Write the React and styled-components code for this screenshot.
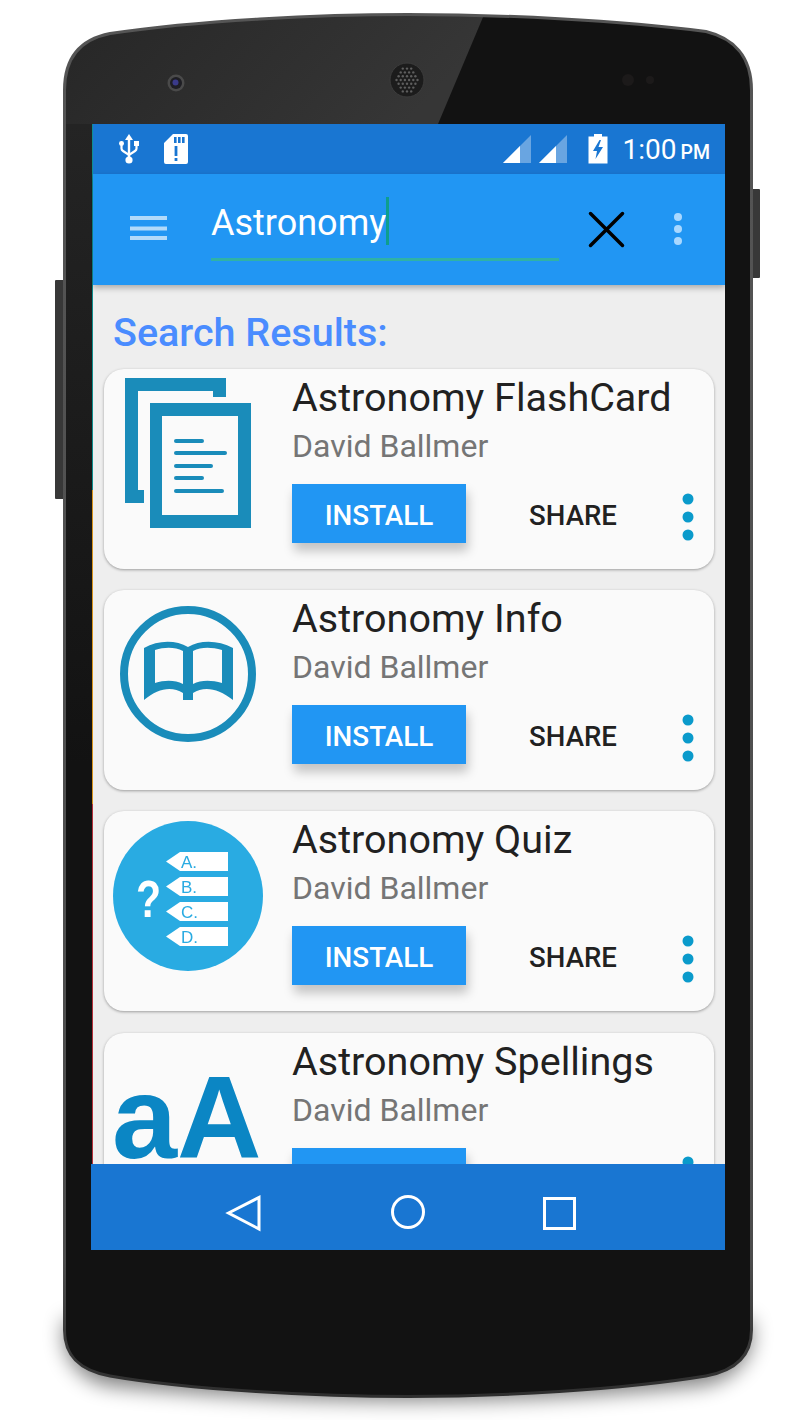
import React from "react";
import styled, { createGlobalStyle } from "styled-components";

const Global = createGlobalStyle`
  html, body { margin: 0; padding: 0; background: #fff; }
  body { font-family: Roboto, "Liberation Sans", sans-serif; }
`;

const Page = styled.div`
  position: relative;
  width: 802px;
  height: 1420px;
  overflow: hidden;
  padding: 124px 77px 0 91px;
  box-sizing: border-box;
`;

const DeviceArt = styled.svg`
  position: absolute;
  left: 0;
  top: 0;
`;

const Screen = styled.div`
  position: relative;
  width: 634px;
  height: 1126px;
  display: flex;
  flex-direction: column;
  overflow: hidden;
  background-image: linear-gradient(
    to bottom,
    #0f8f8f 0,
    #0f8f8f 366px,
    #d8941c 366px,
    #d8941c 680px,
    #b5303a 680px,
    #b5303a 100%
  );
  background-size: 1px 100%;
  background-position: 1px 0;
  background-repeat: no-repeat;
`;

const StatusBar = styled.div`
  height: 50px;
  margin-left: 2px;
  flex: none;
  background: #1976d2;
  display: flex;
  align-items: center;
  color: #fff;
  padding: 0 15px 0 26px;
`;

const StatusLeft = styled.div`
  display: flex;
  align-items: center;
  gap: 25px;
  flex: 1;
`;

const StatusRight = styled.div`
  display: flex;
  align-items: center;
`;

const Clock = styled.div`
  font-size: 28px;
  line-height: 50px;
  padding-top: 4px;
  margin-left: 15px;
  white-space: nowrap;
  & small {
    font-size: 19.5px;
    font-weight: 500;
    margin-left: 4px;
  }
`;

const AppBar = styled.div`
  position: relative;
  z-index: 2;
  height: 111px;
  margin-left: 2px;
  flex: none;
  background: #2196f3;
  box-shadow: 0 3px 6px rgba(0, 0, 0, 0.28);
  display: flex;
  align-items: flex-start;
`;

const MenuIcon = styled.svg`
  flex: none;
  margin: 41px 0 0 37px;
`;

const SearchField = styled.div`
  width: 348px;
  height: 87px;
  margin-left: 44px;
  box-sizing: border-box;
  border-bottom: 3px solid #2fb2a6;
  display: flex;
  align-items: flex-start;
  padding-top: 24px;
  font-size: 36px;
  line-height: 50px;
  color: #fff;
  flex: none;
`;

const Caret = styled.span`
  display: inline-block;
  width: 3px;
  height: 48px;
  margin-top: -1px;
  background: #0e9e8e;
`;

const CloseIcon = styled.svg`
  flex: none;
  margin: 37px 0 0 29px;
`;

const OverflowIcon = styled.svg`
  flex: none;
  margin: 39px 0 0 48px;
`;

const Content = styled.div`
  flex: 1;
  min-height: 0;
  margin-left: 2px;
  background: #eeeeee;
  overflow: hidden;
  padding: 0 11px 0 11px;
`;

const Heading = styled.h1`
  margin: 25px 0 13px 9px;
  font-size: 39.5px;
  line-height: 46px;
  font-weight: 500;
  color: #4a8cff;
`;

const CardList = styled.div`
  display: flex;
  flex-direction: column;
  gap: 21.2px;
`;

const Card = styled.div`
  flex: none;
  height: 200px;
  border-radius: 20px;
  background: #fafafa;
  box-shadow: 0 1px 3px rgba(0, 0, 0, 0.35);
  display: flex;
  overflow: hidden;
`;

const IconCell = styled.svg`
  flex: none;
  width: 188px;
  height: 200px;
  filter: blur(0.6px);
`;

const CardBody = styled.div`
  flex: 1;
  display: flex;
  flex-direction: column;
  min-width: 0;
`;

const AppName = styled.div`
  font-size: 39.5px;
  line-height: 48px;
  margin-top: 5px;
  color: #212121;
  white-space: nowrap;
`;

const Author = styled.div`
  font-size: 32px;
  line-height: 40px;
  margin-top: 4px;
  color: #757575;
`;

const Actions = styled.div`
  display: flex;
  align-items: center;
  margin-top: 18px;
`;

const InstallButton = styled.div`
  width: 174px;
  height: 59px;
  box-sizing: border-box;
  padding-top: 3px;
  flex: none;
  background: #2196f3;
  color: #fff;
  font-size: 27.8px;
  font-weight: 500;
  display: flex;
  align-items: center;
  justify-content: center;
  box-shadow: 2px 8px 10px rgba(0, 0, 0, 0.22);
`;

const ShareButton = styled.div`
  width: 88px;
  margin-left: 63px;
  padding-top: 3px;
  flex: none;
  color: #212121;
  font-size: 27.6px;
  font-weight: 500;
  text-align: center;
`;

const MoreDots = styled.svg`
  flex: none;
  margin: 6px 0 0 65px;
`;

const NavBar = styled.div`
  height: 86px;
  flex: none;
  position: relative;
  z-index: 3;
  background: #1976d2;
  display: flex;
  align-items: flex-start;
  padding-left: 134px;
`;

const NavIcon = styled.svg`
  flex: none;
  margin: ${(p) => p.$top}px 0 0 ${(p) => p.$gap}px;
`;

function Device() {
  const body =
    "M64.5 90C64.5 56 82 39 110 33.5C200 20 320 14.5 408 14.5C500 14.5 620 20 706 31.5C733 38 751.5 56 751.5 90L751.5 1330C751.5 1358 733 1371 706 1376C620 1390 500 1396.5 408 1396.5C320 1396.5 190 1390 110 1376C82 1371 64.5 1358 64.5 1330Z";
  const holes = [];
  for (let r = 0; r < 7; r++) {
    for (let c = 0; c < 7; c++) {
      const dx = (c - 3) * 4.2 + (r % 2 ? 2.1 : 0);
      const dy = (r - 3) * 3.8;
      if (dx * dx + dy * dy < 150) holes.push([407 + dx, 80 + dy]);
    }
  }
  return (
    <DeviceArt width="802" height="1420" viewBox="0 0 802 1420">
      <defs>
        <filter id="soft" x="-20%" y="-50%" width="140%" height="200%">
          <feGaussianBlur stdDeviation="10" />
        </filter>
        <clipPath id="bodyClip">
          <path d={body} />
        </clipPath>
        <linearGradient id="glare" x1="0" y1="0" x2="1" y2="0.25">
          <stop offset="0" stopColor="#262626" />
          <stop offset="0.7" stopColor="#313131" />
          <stop offset="1" stopColor="#363636" />
        </linearGradient>
        <linearGradient id="strip" x1="0" y1="0" x2="0" y2="1">
          <stop offset="0" stopColor="#242424" />
          <stop offset="1" stopColor="#121212" />
        </linearGradient>
        <linearGradient id="rim" x1="0" y1="0" x2="0" y2="1">
          <stop offset="0" stopColor="#555" />
          <stop offset="0.9" stopColor="#4c4c4c" />
          <stop offset="1" stopColor="#2e2e2e" />
        </linearGradient>
      </defs>
      <path
        d="M64 1320L752 1320L752 1345Q740 1380 700 1386Q408 1416 110 1386Q75 1380 64 1345Z"
        fill="#000"
        opacity="0.5"
        filter="url(#soft)"
      />
      <rect x="55" y="280" width="12" height="219" rx="1" fill="#383838" />
      <rect x="749" y="189" width="11" height="89" rx="1" fill="#383838" />
      <path d={body} fill="#121212" />
      <g clipPath="url(#bodyClip)">
        <rect x="63" y="124" width="30" height="640" fill="url(#strip)" />
        <polygon points="60,10 486,10 438,124 60,124" fill="url(#glare)" />
      </g>
      <path d={body} fill="none" stroke="url(#rim)" strokeWidth="3" />
      <circle cx="176" cy="83" r="8.5" fill="#4a4a4a" />
      <circle cx="176" cy="83" r="6" fill="#1e1e24" />
      <circle cx="175.5" cy="82.5" r="3" fill="#3a3a8a" />
      <circle cx="407" cy="80" r="17" fill="#1c1c1c" stroke="#3c3c3c" strokeWidth="1" />
      {holes.map(([x, y], i) => (
        <circle key={i} cx={x} cy={y} r="1.2" fill="#5e5e5e" />
      ))}
      <circle cx="628" cy="80" r="6" fill="#1c1a1a" />
      <circle cx="650" cy="80" r="4" fill="#1c1a1a" />
    </DeviceArt>
  );
}

const Blue = "#1a8cba";

function DocsIcon() {
  return (
    <IconCell viewBox="104 369 188 200">
      <polygon fill={Blue} points="125,378 226,378 226,397 213,397 213,391 138,391 138,490 144,490 144,503 125,503" />
      <path fill={Blue} fillRule="evenodd" d="M150 403H251V528H150ZM162 416V515H238V416Z" />
      <g stroke={Blue} strokeWidth="4" strokeLinecap="round">
        <line x1="176" y1="441" x2="202" y2="441" />
        <line x1="176" y1="453" x2="225" y2="453" />
        <line x1="176" y1="466" x2="211" y2="466" />
        <line x1="176" y1="478" x2="202" y2="478" />
        <line x1="176" y1="491" x2="222" y2="491" />
      </g>
    </IconCell>
  );
}

function BookIcon() {
  return (
    <IconCell viewBox="104 590 188 200">
      <circle cx="188" cy="674" r="64" fill="none" stroke={Blue} strokeWidth="8" />
      <path
        fill={Blue}
        fillRule="evenodd"
        d="M144 648C158 640 176 640 188 647C200 640 218 640 233 648V700C218 688 204 686 193 693V700H183V693C172 686 158 688 144 700ZM155 650V683C165 680 175 680 183 684V651C175 647 165 647 155 650ZM193 651V684C201 680 211 680 222 683V650C211 647 201 647 193 651Z"
      />
    </IconCell>
  );
}

const Tag = ({ y, label }) => (
  <g>
    <polygon fill="#fff" points={`166,${y + 9.5} 180,${y} 228,${y} 228,${y + 19} 180,${y + 19}`} />
    <text x="181" y={y + 16} fontFamily="Liberation Sans, sans-serif" fontSize="17" fill="#29abe2">
      {label}
    </text>
  </g>
);

function QuizIcon() {
  return (
    <IconCell viewBox="104 811 188 200">
      <circle cx="188" cy="896" r="75" fill="#29abe2" />
      <Tag y={852} label="A." />
      <Tag y={877} label="B." />
      <Tag y={902} label="C." />
      <Tag y={927} label="D." />
      <text
        x="136"
        y="917"
        fontFamily="Liberation Sans, sans-serif"
        fontWeight="700"
        fontSize="51"
        fill="#fff"
        textLength="25"
        lengthAdjust="spacingAndGlyphs"
      >
        ?
      </text>
    </IconCell>
  );
}

function SpellIcon() {
  return (
    <IconCell viewBox="104 1033 188 200">
      <text x="112" y="1158" fontFamily="Liberation Sans, sans-serif" fontWeight="700" fontSize="117" fill="#0b86c4">
        aA
      </text>
    </IconCell>
  );
}

const apps = [
  { name: "Astronomy FlashCard", Icon: DocsIcon },
  { name: "Astronomy Info", Icon: BookIcon },
  { name: "Astronomy Quiz", Icon: QuizIcon },
  { name: "Astronomy Spellings", Icon: SpellIcon },
];

function AppCard({ name, Icon }) {
  return (
    <Card>
      <Icon />
      <CardBody>
        <AppName>{name}</AppName>
        <Author>David Ballmer</Author>
        <Actions>
          <InstallButton>INSTALL</InstallButton>
          <ShareButton>SHARE</ShareButton>
          <MoreDots width="12" height="48" viewBox="0 0 12 48">
            <circle cx="6" cy="6" r="5.5" fill="#0a9acb" />
            <circle cx="6" cy="24" r="5.5" fill="#0a9acb" />
            <circle cx="6" cy="42" r="5.5" fill="#0a9acb" />
          </MoreDots>
        </Actions>
      </CardBody>
    </Card>
  );
}

const SignalIcon = styled.svg`
  flex: none;
  margin-right: 8px;
`;

const BatteryIcon = styled.svg`
  flex: none;
  margin-left: 13px;
`;

const Signal = () => (
  <SignalIcon width="28" height="30" viewBox="0 0 28 30">
    <polygon points="28,1 28,29 0,29" fill="#fff" opacity="0.35" />
    <polygon points="17,12 17,29 0,29" fill="#fff" />
  </SignalIcon>
);

export default function App() {
  return (
    <Page>
      <Global />
      <Device />
      <Screen>
        <StatusBar>
          <StatusLeft>
            <svg width="20" height="30" viewBox="0 0 20 30">
              <g fill="#fff">
                <polygon points="10,0 14,6 6,6" />
                <rect x="8.8" y="5" width="2.4" height="20" />
                <circle cx="10" cy="26" r="3.6" />
                <rect x="0" y="7" width="5" height="5" rx="2.4" />
                <rect x="15" y="7" width="5" height="5" />
              </g>
              <path d="M2.5 11V14.5Q2.5 16 4 17L10 21L16 17Q17.5 16 17.5 14.5V11" fill="none" stroke="#fff" strokeWidth="2.2" />
            </svg>
            <svg width="24" height="30" viewBox="0 0 24 30">
              <path
                fill="#fff"
                fillRule="evenodd"
                d="M9 0H22Q24 0 24 2V28Q24 30 22 30H2Q0 30 0 28V9ZM10 3V9H12.6V3ZM14 3V9H16.6V3ZM18 3V9H20.6V3ZM10.6 12V22H13.4V12ZM10.6 24V27H13.4V24Z"
              />
            </svg>
          </StatusLeft>
          <StatusRight>
            <Signal />
            <Signal />
            <BatteryIcon width="20" height="30" viewBox="0 0 20 30">
              <path
                fill="#fff"
                fillRule="evenodd"
                d="M6 0H14V2.5H19.5V29.5H0.5V2.5H6ZM11.5 6L5 17H9L7.5 25L15 13H10.5L13 6Z"
              />
            </BatteryIcon>
            <Clock>
              1:00<small>PM</small>
            </Clock>
          </StatusRight>
        </StatusBar>
        <AppBar>
          <MenuIcon width="37" height="25" viewBox="0 0 37 25">
            <g fill="#fff" opacity="0.65">
              <rect y="1" width="37" height="4" />
              <rect y="11.5" width="37" height="4" />
              <rect y="21" width="37" height="4" />
            </g>
          </MenuIcon>
          <SearchField>
            Astronomy
            <Caret />
          </SearchField>
          <CloseIcon width="37" height="37" viewBox="0 0 37 37">
            <path d="M2.5 2.5L34.5 34.5M34.5 2.5L2.5 34.5" stroke="#000" strokeWidth="3.5" strokeLinecap="round" />
          </CloseIcon>
          <OverflowIcon width="10" height="36" viewBox="0 0 10 36">
            <g fill="#a9d8ff">
              <circle cx="5" cy="4" r="4" />
              <circle cx="5" cy="16" r="4" />
              <circle cx="5" cy="28" r="4" />
            </g>
          </OverflowIcon>
        </AppBar>
        <Content>
          <Heading>Search Results:</Heading>
          <CardList>
            {apps.map((a) => (
              <AppCard key={a.name} {...a} />
            ))}
          </CardList>
        </Content>
        <NavBar>
          <NavIcon $top={31} $gap={0} width="37" height="38" viewBox="0 0 37 38">
            <polygon points="3.5,18 34,2.5 34,34" fill="none" stroke="#fff" strokeWidth="3" />
          </NavIcon>
          <NavIcon $top={31} $gap={129} width="34" height="34" viewBox="0 0 34 34">
            <circle cx="17" cy="17" r="15.5" fill="none" stroke="#fff" strokeWidth="3" />
          </NavIcon>
          <NavIcon $top={33} $gap={118} width="33" height="33" viewBox="0 0 33 33">
            <rect x="1.5" y="1.5" width="30" height="30" fill="none" stroke="#fff" strokeWidth="3" />
          </NavIcon>
        </NavBar>
      </Screen>
    </Page>
  );
}
